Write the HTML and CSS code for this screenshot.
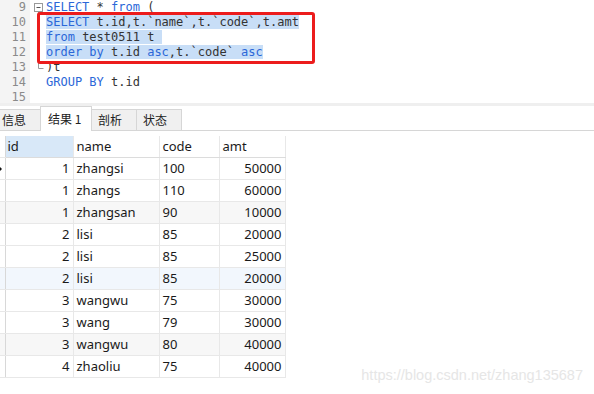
FILE: index.html
```html
<!DOCTYPE html>
<html lang="zh-CN">
<head>
  <meta charset="UTF-8">
  <title>查询结果</title>
  <link rel="stylesheet" href="styles.css">
</head>
<body>
  <!-- SQL 编辑区 -->
  <div class="editor">
    <div class="gutter">
      <div>9</div><div>10</div><div>11</div><div>12</div><div>13</div><div>14</div><div>15</div>
    </div>
    <div class="fold">
      <svg width="16" height="103" viewBox="0 0 16 103">
        <rect x="4.5" y="3.5" width="8" height="8" fill="#fff" stroke="#9a9a9a"/>
        <path d="M6.5 7.5h4" stroke="#555"/>
        <path d="M8.5 12v56.5h5" fill="none" stroke="#9a9a9a"/>
      </svg>
    </div>
    <div class="code">
      <div class="line"><span class="kw">SELECT</span> * <span class="kw">from</span> (</div>
      <div class="line"><span class="sel"><span class="kw">SELECT</span> t.id,t.`name`,t.`code`,t.amt</span></div>
      <div class="line"><span class="sel"><span class="kw">from</span> test0511 t </span></div>
      <div class="line"><span class="sel"><span class="kw">order by</span> t.id <span class="kw">asc</span>,t.`code` <span class="kw">asc</span></span></div>
      <div class="line">)t</div>
      <div class="line"><span class="kw">GROUP BY</span> t.id</div>
      <div class="line"> </div>
      <div class="mark"></div>
    </div>
  </div>

  <div class="split"></div>

  <!-- 结果标签 -->
  <div class="tabs">
    <div class="tab first">信息</div>
    <div class="tab active">结果 1</div>
    <div class="tab">剖析</div>
    <div class="tab">状态</div>
  </div>

  <table class="grid">
    <colgroup>
      <col class="c-ind"><col class="c-id"><col class="c-name"><col class="c-code"><col class="c-amt">
    </colgroup>
    <thead>
      <tr><th class="ind"></th><th class="focus">id</th><th>name</th><th>code</th><th>amt</th></tr>
    </thead>
    <tbody>
      <tr><td class="ind"><span class="cur"></span></td><td class="num">1</td><td>zhangsi</td><td>100</td><td class="num">50000</td></tr>
      <tr><td class="ind"></td><td class="num">1</td><td>zhangs</td><td>110</td><td class="num">60000</td></tr>
      <tr class="alt"><td class="ind"></td><td class="num">1</td><td>zhangsan</td><td>90</td><td class="num">10000</td></tr>
      <tr><td class="ind"></td><td class="num">2</td><td>lisi</td><td>85</td><td class="num">20000</td></tr>
      <tr><td class="ind"></td><td class="num">2</td><td>lisi</td><td>85</td><td class="num">25000</td></tr>
      <tr class="hover"><td class="ind"></td><td class="num">2</td><td>lisi</td><td>85</td><td class="num">20000</td></tr>
      <tr><td class="ind"></td><td class="num">3</td><td>wangwu</td><td>75</td><td class="num">30000</td></tr>
      <tr><td class="ind"></td><td class="num">3</td><td>wang</td><td>79</td><td class="num">30000</td></tr>
      <tr class="alt"><td class="ind"></td><td class="num">3</td><td>wangwu</td><td>80</td><td class="num">40000</td></tr>
      <tr><td class="ind"></td><td class="num">4</td><td>zhaoliu</td><td>75</td><td class="num">40000</td></tr>
    </tbody>
  </table>

  <div class="watermark">https://blog.csdn.net/zhang135687</div>
</body>
</html>
```

FILE: styles.css
```css
* {
  box-sizing: border-box;
  margin: 0;
  padding: 0;
}

body {
  position: relative;
  width: 594px;
  height: 394px;
  overflow: hidden;
  background: #fff;
  color: #1a1a1a;
  font-family: 'Noto Sans', 'Noto Sans CJK SC', sans-serif;
  font-size: 13px;
}

/* 编辑区 */
.editor {
  display: flex;
  height: 103px;
  overflow: hidden;
  font-family: 'DejaVu Sans Mono', 'Liberation Mono', monospace;
  font-size: 12px;
  line-height: 15px;
}

.gutter {
  width: 30px;
  background: #f4f4f4;
  color: #8a8a8a;
  text-align: right;
  padding-right: 4px;
}

.fold {
  width: 16px;
}

.fold svg {
  display: block;
}

.code {
  position: relative;
  flex: 1;
  color: #333;
}

.line {
  height: 15px;
  white-space: pre;
}

.kw {
  color: #2b67d8;
}

.sel {
  background: #c8def7;
}

.mark {
  position: absolute;
  left: -9px;
  top: 12px;
  width: 278px;
  height: 52px;
  border: 3px solid #ec1c1c;
  border-radius: 3px;
}

.split {
  height: 3px;
  background: #efefef;
}

/* 标签 */
.tabs {
  display: flex;
  align-items: flex-end;
  height: 25px;
  border-bottom: 1px solid #d6d6d6;
  font-family: 'Noto Sans CJK SC', sans-serif;
  font-size: 12px;
}

.tab {
  height: 21px;
  line-height: 19px;
  width: 46px;
  padding-left: 6px;
  background: #f0f0f0;
  border: 1px solid #d6d6d6;
  border-bottom: none;
  margin-left: -1px;
  color: #222;
}

.tab.first {
  width: 41px;
  margin-left: 0;
  padding-left: 2px;
  border-left: none;
}

.tab.active {
  height: 25px;
  line-height: 23px;
  width: 52px;
  padding-left: 7px;
  background: #fff;
  margin-bottom: -1px;
}

/* 结果表格 */
.grid {
  margin-top: 5px;
  border-collapse: collapse;
  table-layout: fixed;
  width: 285px;
}

.c-ind { width: 5px; }
.c-id { width: 68px; }
.c-name { width: 86px; }
.c-code { width: 60px; }
.c-amt { width: 66px; }

.grid th,
.grid td {
  height: 22px;
  padding: 0 3px;
  border: 1px solid #e8e8e8;
  text-align: left;
  font-weight: normal;
  white-space: nowrap;
  overflow: hidden;
}

.grid th {
  height: 21px;
  border-top: none;
  border-bottom-color: #dcdcdc;
}

.grid th.focus {
  padding-left: 2px;
}

.grid th.ind,
.grid td.ind {
  padding: 0;
  border-left: none;
  border-right-color: #d8d8d8;
  position: relative;
}

.grid th.ind {
  border-bottom-color: #e8e8e8;
}

.grid th.focus {
  background: #d8e8f8;
}

.grid td.num {
  text-align: right;
}

/* 当前行指示 */
.cur {
  position: absolute;
  left: -1px;
  top: 8px;
  width: 0;
  height: 0;
  border-top: 3px solid transparent;
  border-bottom: 3px solid transparent;
  border-left: 3px solid #111;
}

.grid tr.alt td {
  background: #f7f7f7;
}

.grid tr.hover td {
  background: #f2f7fd;
}

.watermark {
  position: absolute;
  right: 11px;
  top: 367px;
  font-family: 'Liberation Sans', Arial, sans-serif;
  font-size: 14.5px;
  color: #e6e6e6;
}
```
